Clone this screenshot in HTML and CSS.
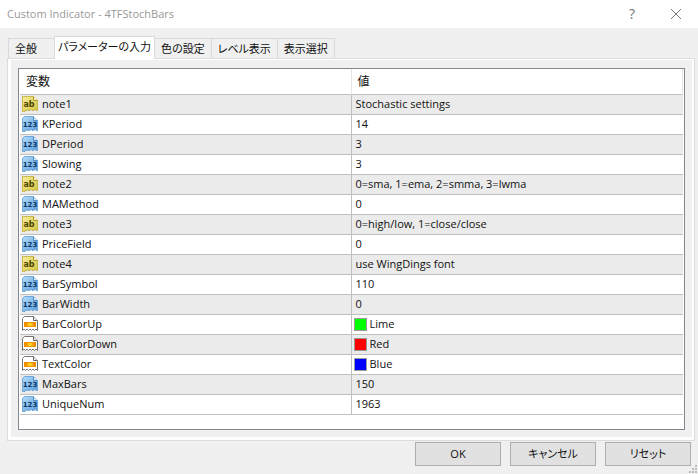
FILE: index.html
```html
<!DOCTYPE html>
<html lang="ja">
<head>
    <meta charset="UTF-8">
    <title>Custom Indicator - 4TFStochBars</title>
    <link rel="stylesheet" href="styles.css">
</head>
<body>
    <svg class="defs" aria-hidden="true">
        <defs>
            <linearGradient id="blue" x1="0" y1="0" x2="1" y2="1">
                <stop offset="0" stop-color="#b5dcfa"/>
                <stop offset="1" stop-color="#5b9bd8"/>
            </linearGradient>
            <linearGradient id="yellow" x1="0" y1="0" x2="1" y2="1">
                <stop offset="0" stop-color="#f5eb9c"/>
                <stop offset="1" stop-color="#d5c440"/>
            </linearGradient>
            <linearGradient id="orange">
                <stop offset="0" stop-color="#f07800"/>
                <stop offset=".5" stop-color="#ffe02a"/>
                <stop offset="1" stop-color="#f07800"/>
            </linearGradient>
        </defs>
        <symbol id="icon-ab" viewBox="0 0 16 16">
            <path d="M.5 .5H11.5L15.5 4.5V14.5H14V13.5H12V14.5H10V13.5H8V14.5H6V13.5H5V14.5H3V15.5H.5Z" fill="url(#yellow)" stroke="#c9b94a"/>
            <path d="M11.5 .5V4.5H15.5" fill="#fbf5c0" stroke="#a99a32"/>
        </symbol>
        <symbol id="icon-123" viewBox="0 0 16 16">
            <path d="M.5 2.5L2.5 .5H11.5L15.5 4.5V14.5H14V13.5H12V14.5H10V13.5H8V14.5H6V13.5H5V14.5H3V15.5H.5Z" fill="url(#blue)" stroke="#6ea9dc"/>
            <path d="M11.5 .5V4.5H15.5" fill="#d5ecff" stroke="#5490c8"/>
        </symbol>
        <symbol id="icon-color" viewBox="0 0 16 16">
            <path d="M.5 14.5V2.5L2.5 .5H11.5L15.5 4.5V14.5L14 13L12.5 14.5L11 13L9.5 14.5L8 13L6.5 14.5L5 13L3.5 14.5L2 13Z" fill="#fff" stroke="#77736f"/>
            <path d="M11.5 .5V4.5H15.5" fill="#eee" stroke="#68645f"/>
            <rect x="2" y="6" width="12" height="5" fill="#ef9200"/>
            <rect x="3" y="7" width="10" height="3" fill="url(#orange)"/>
        </symbol>
    </svg>

    <div class="dialog">
        <header class="titlebar">
            <h1 class="title">Custom Indicator - 4TFStochBars</h1>
            <button class="caption-btn help" type="button" aria-label="Help">?</button>
            <button class="caption-btn" type="button" aria-label="Close">
                <svg width="12" height="12" viewBox="0 0 12 12"><path d="M1 1L11 11M11 1L1 11" stroke="#777" fill="none"/></svg>
            </button>
        </header>

        <div class="tabs" role="tablist">
            <button class="tab first" type="button" role="tab">全般</button>
            <button class="tab selected" type="button" role="tab" aria-selected="true">パラメーターの入力</button>
            <button class="tab" type="button" role="tab">色の設定</button>
            <button class="tab" type="button" role="tab">レベル表示</button>
            <button class="tab" type="button" role="tab">表示選択</button>
        </div>

        <main class="panel">
            <div class="list">
                <table class="params">
                    <thead>
                        <tr><th>変数</th><th>値</th></tr>
                    </thead>
                    <tbody>
                        <tr><td><svg class="icon ab"><use href="#icon-ab"/><text x="7" y="11">ab</text></svg>note1</td><td>Stochastic settings</td></tr>
                        <tr><td><svg class="icon num"><use href="#icon-123"/><text x="8" y="11">123</text></svg>KPeriod</td><td>14</td></tr>
                        <tr><td><svg class="icon num"><use href="#icon-123"/><text x="8" y="11">123</text></svg>DPeriod</td><td>3</td></tr>
                        <tr><td><svg class="icon num"><use href="#icon-123"/><text x="8" y="11">123</text></svg>Slowing</td><td>3</td></tr>
                        <tr><td><svg class="icon ab"><use href="#icon-ab"/><text x="7" y="11">ab</text></svg>note2</td><td>0=sma, 1=ema, 2=smma, 3=lwma</td></tr>
                        <tr><td><svg class="icon num"><use href="#icon-123"/><text x="8" y="11">123</text></svg>MAMethod</td><td>0</td></tr>
                        <tr><td><svg class="icon ab"><use href="#icon-ab"/><text x="7" y="11">ab</text></svg>note3</td><td>0=high/low, 1=close/close</td></tr>
                        <tr><td><svg class="icon num"><use href="#icon-123"/><text x="8" y="11">123</text></svg>PriceField</td><td>0</td></tr>
                        <tr><td><svg class="icon ab"><use href="#icon-ab"/><text x="7" y="11">ab</text></svg>note4</td><td>use WingDings font</td></tr>
                        <tr><td><svg class="icon num"><use href="#icon-123"/><text x="8" y="11">123</text></svg>BarSymbol</td><td>110</td></tr>
                        <tr><td><svg class="icon num"><use href="#icon-123"/><text x="8" y="11">123</text></svg>BarWidth</td><td>0</td></tr>
                        <tr><td><svg class="icon"><use href="#icon-color"/></svg>BarColorUp</td><td class="color"><span class="swatch lime"></span>Lime</td></tr>
                        <tr><td><svg class="icon"><use href="#icon-color"/></svg>BarColorDown</td><td class="color"><span class="swatch red"></span>Red</td></tr>
                        <tr><td><svg class="icon"><use href="#icon-color"/></svg>TextColor</td><td class="color"><span class="swatch blue"></span>Blue</td></tr>
                        <tr><td><svg class="icon num"><use href="#icon-123"/><text x="8" y="11">123</text></svg>MaxBars</td><td>150</td></tr>
                        <tr><td><svg class="icon num"><use href="#icon-123"/><text x="8" y="11">123</text></svg>UniqueNum</td><td>1963</td></tr>
                    </tbody>
                </table>
            </div>
        </main>

        <footer class="buttons">
            <button class="btn" type="button">OK</button>
            <button class="btn" type="button">キャンセル</button>
            <button class="btn" type="button">リセット</button>
        </footer>
        <svg class="grip" width="8" height="8" viewBox="0 0 8 8" aria-hidden="true">
            <path d="M6 0h2v2h-2zM3 3h2v2h-2zM6 3h2v2h-2zM0 6h2v2h-2zM3 6h2v2h-2zM6 6h2v2h-2z" fill="#bdbdbd"/>
        </svg>
    </div>
</body>
</html>
```
FILE: styles.css
```css
*{
    box-sizing: border-box;
    margin: 0;
    padding: 0;
}
body{
    background: #f0f0f0;
    color: #111;
    font: 11px/18px "Open Sans", "Noto Sans CJK JP", sans-serif;
}
button{
    font: inherit;
    color: inherit;
    font-feature-settings: "palt";
}
.defs{
    position: absolute;
    width: 0;
    height: 0;
}
.dialog{
    position: relative;
    display: flex;
    flex-direction: column;
    min-height: 100vh;
}

/* title bar */
.titlebar{
    display: flex;
    align-items: center;
    height: 28px;
    padding-left: 7px;
    background: #fff;
    color: #999;
}
.title{
    flex: 1;
    font-size: 11px;
    font-weight: normal;
}
.caption-btn{
    display: flex;
    align-items: center;
    justify-content: center;
    width: 44px;
    height: 28px;
    border: 0;
    background: none;
}
.help{
    color: #777;
    font-size: 14px;
}

/* tabs */
.tabs{
    display: flex;
    align-items: flex-end;
    padding: 8px 8px 0;
}
.tab{
    height: 20px;
    padding: 0 6px;
    border: 1px solid #d9d9d9;
    border-width: 1px 1px 0 0;
    background: #f0f0f0;
    white-space: nowrap;
}
.tab.first{
    width: 46px;
    border-left-width: 1px;
    border-right-width: 0;
    text-align: left;
}
.tab.selected{
    height: 23px;
    margin-bottom: -1px;
    padding: 0 3px 3px;
    border-left-width: 1px;
    background: #fff;
    z-index: 1;
}

/* parameter list */
.panel{
    margin: 0 3px 0 7px;
    border: solid #fff;
    border-width: 2px 3px 4px 4px;
    outline: 1px solid #dcdcdc;
    outline-offset: -1px;
    padding: 8px 7px 7px;
}
.list{
    border: 1px solid #828790;
    padding: 0 1px 14px;
    background: #fff;
}
.params{
    width: 100%;
    table-layout: fixed;
    border-collapse: separate;
    border-spacing: 0;
}
.params th{
    height: 26px;
    padding: 0 6px;
    border-right: 1px solid #e5e5e5;
    border-bottom: 1px solid #c0c0c0;
    font-size: 12px;
    font-weight: normal;
    text-align: left;
}
.params td{
    height: 20px;
    padding: 0 4px;
    border-right: 1px solid #c0c0c0;
    border-bottom: 1px solid #c0c0c0;
    vertical-align: top;
    white-space: nowrap;
}
.params td:first-child{
    padding-left: 2px;
}
.params td:last-child{
    border-right: 0;
}
.params tbody tr:nth-child(odd){
    background: #ebebeb;
}
.icon{
    width: 16px;
    height: 16px;
    margin: 1px 4px 0 0;
    vertical-align: top;
}
.icon text{
    font-family: "DejaVu Sans", sans-serif;
    font-weight: bold;
    text-anchor: middle;
}
.ab{
    font-size: 8px;
    fill: #4d4500;
}
.num{
    font-size: 7px;
    fill: #0b3566;
}
.params .color{
    padding-left: 2px;
}
.swatch{
    display: inline-block;
    width: 13px;
    height: 13px;
    margin: 3px 3px 0 0;
    border: 1px solid #999;
    vertical-align: top;
}
.lime{
    background: #00ff00;
}
.red{
    background: #ff0000;
}
.blue{
    background: #0000ff;
}

/* bottom buttons */
.buttons{
    display: flex;
    justify-content: flex-end;
    gap: 9px;
    padding: 1px 7px 0;
}
.btn{
    width: 86px;
    height: 24px;
    border: 1px solid #adadad;
    background: #e1e1e1;
}
.grip{
    position: absolute;
    right: 1px;
    bottom: 1px;
}
```
